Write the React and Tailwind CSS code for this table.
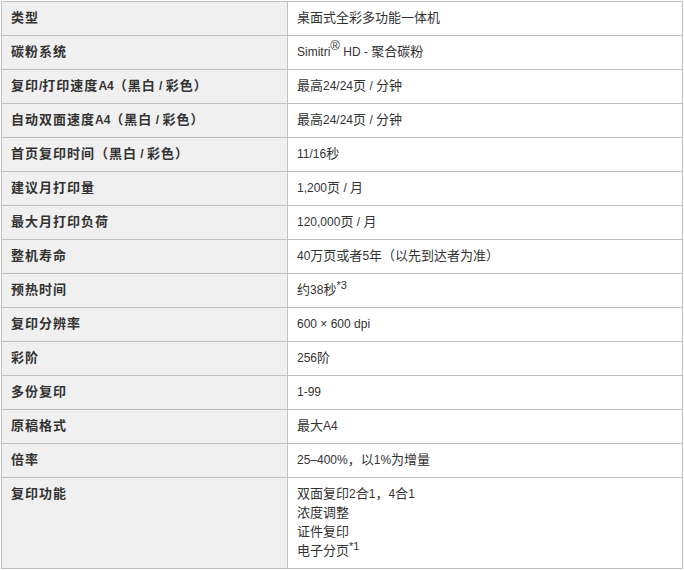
const cjk = /([\u3000-\u9fff\uff00-\uffef]+)/;

// CJK glyphs in the reference render a bit wider than the latin ones
function T({ children, wide }) {
  return children.split(cjk).map((part, i) =>
    cjk.test(part) ? (
      <span key={i} className={wide ? "text-[13px] leading-none tracking-[1px]" : "text-[13px] leading-none"}>{part}</span>
    ) : (
      part
    )
  );
}

const rows = [
  ["类型", <T>桌面式全彩多功能一体机</T>],
  ["碳粉系统", <>Simitri<sup className="text-[13px] leading-none top-[-6px]">®</sup> HD - <T>聚合碳粉</T></>],
  ["复印/打印速度A4（黑白 / 彩色）", <T>最高24/24页 / 分钟</T>],
  ["自动双面速度A4（黑白 / 彩色）", <T>最高24/24页 / 分钟</T>],
  ["首页复印时间（黑白 / 彩色）", <T>11/16秒</T>],
  ["建议月打印量", <T>1,200页 / 月</T>],
  ["最大月打印负荷", <T>120,000页 / 月</T>],
  ["整机寿命", <T>40万页或者5年（以先到达者为准）</T>],
  ["预热时间", <><T>约38秒</T><sup className="text-[11px] leading-none top-[-5px]">*3</sup></>],
  ["复印分辨率", "600 × 600 dpi"],
  ["彩阶", <T>256阶</T>],
  ["多份复印", "1-99"],
  ["原稿格式", <T>最大A4</T>],
  ["倍率", <T>25–400%，以1%为增量</T>],
  ["复印功能", <><T>双面复印2合1，4合1</T><br /><T>浓度调整</T><br /><T>证件复印</T><br /><T>电子分页</T><sup className="text-[11px] leading-none top-[-5px]">*1</sup></>],
];

export default function App() {
  return (
    <div className="p-px bg-white" style={{ fontFamily: '"Liberation Sans", "Noto Sans CJK SC", sans-serif' }}>
      <table className="w-[682px] border-collapse border border-[#c0c0c0] text-[12px] leading-[19px] text-[#333]">
        <colgroup>
          <col className="w-[286px]" />
          <col />
        </colgroup>
        <tbody>
          {rows.map(([label, value], i) => (
            <tr key={i}>
              <td className="border border-[#c0c0c0] bg-[#f0f0f0] pl-[9px] py-[7px] font-bold align-top"><T wide>{label}</T></td>
              <td className="border border-[#c0c0c0] bg-white pl-[9px] py-[7px] align-top">{value}</td>
            </tr>
          ))}
        </tbody>
      </table>
    </div>
  );
}
